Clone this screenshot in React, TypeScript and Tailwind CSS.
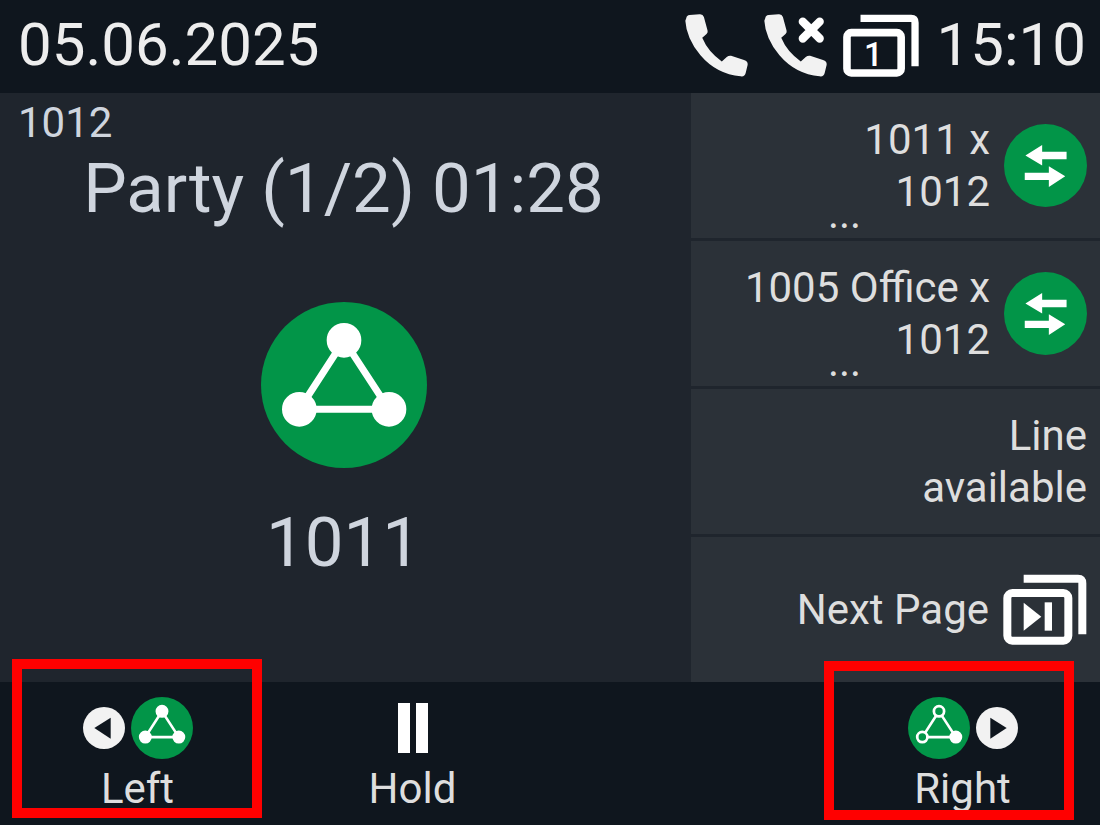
import React from "react";

const GREEN = "#029548";

const HANDSET =
  "M4 12Q5 4 14 3L44 1Q54 0 57 9L68 50Q70 56 65 60L52 72Q70 115 111 143L126 130Q131 125 139 126L178 139Q190 143 189 153L183 178Q180 190 168 188Q95 182 46 124Q4 72 1 20Z";

function PhoneIcon({ missed = false }: { missed?: boolean }) {
  return (
    <svg viewBox="0 0 190 190" className="size-[63px] shrink-0" aria-hidden="true">
      <path d={HANDSET} fill="#f2f2f2" />
      {missed && (
        <path d="M117 23L168 74M168 23L117 74" stroke="#ffffff" strokeWidth="25" strokeLinecap="round" />
      )}
    </svg>
  );
}

function PageIcon() {
  return (
    <svg viewBox="0 0 230 190" className="h-[63px] w-[76px] shrink-0" role="img" aria-label="Page 1">
      <path d="M53 13H206Q218 13 218 26V158" fill="none" stroke="#ffffff" strokeWidth="22" />
      <rect x="12" y="56" width="164" height="122" rx="13" fill="none" stroke="#ffffff" strokeWidth="23" />
      <text
        x="92"
        y="158"
        textAnchor="middle"
        fontFamily="Roboto, sans-serif"
        fontSize="100"
        fontWeight="500"
        fill="#ffffff"
      >
        1
      </text>
    </svg>
  );
}

function NextPageIcon() {
  return (
    <svg viewBox="0 0 252 213" className="h-[71px] w-[84px] shrink-0" aria-hidden="true">
      <path d="M62 14H225Q238 14 238 28V181" fill="none" stroke="#ffffff" strokeWidth="24" />
      <rect x="13" y="57" width="183" height="143" rx="15" fill="none" stroke="#ffffff" strokeWidth="24" />
      <path d="M62 86L115 128L62 170Z" fill="#ffffff" />
      <rect x="125" y="85" width="22" height="85" fill="#ffffff" />
    </svg>
  );
}

function TransferIcon() {
  return (
    <svg viewBox="0 0 248 248" className="size-[83px] shrink-0" aria-hidden="true">
      <circle cx="124" cy="124" r="124" fill={GREEN} />
      <path
        d="M64 94L114 63V83H187V105H114V124ZM183 156L134 126V146H62V167H134V188Z"
        fill="#ffffff"
      />
    </svg>
  );
}

function ConferenceIcon({ className, hollow = false }: { className: string; hollow?: boolean }) {
  const ring = hollow ? GREEN : "#ffffff";
  return (
    <svg viewBox="0 0 498 498" className={className} aria-hidden="true">
      <circle cx="249" cy="249" r="249" fill={GREEN} />
      <path d="M249 115L115 322H384Z" fill="none" stroke="#ffffff" strokeWidth="21" />
      <circle cx="249" cy="115" r="41" fill={ring} stroke="#ffffff" strokeWidth="22" />
      <circle cx="115" cy="322" r="41" fill={ring} stroke="#ffffff" strokeWidth="22" />
      <circle cx="384" cy="322" r="41" fill="#ffffff" stroke="#ffffff" strokeWidth="22" />
    </svg>
  );
}

function ArrowDot({ direction }: { direction: "left" | "right" }) {
  return (
    <svg viewBox="0 0 126 126" className="size-[42px] shrink-0" aria-hidden="true">
      <circle cx="63" cy="63" r="63" fill="#f2f2f2" />
      <path d={direction === "left" ? "M34 63L83 32V95Z" : "M92 63L43 32V95Z"} fill="#0f161e" />
    </svg>
  );
}

function LineKey({ lines, more = false, icon }: { lines: string[]; more?: boolean; icon?: React.ReactNode }) {
  return (
    <button
      type="button"
      className="flex flex-1 items-center justify-end gap-3.5 bg-[#2b3138] pr-[13px] pl-2 text-[42px] leading-[52px] text-[#dedede]"
    >
      <span className="flex flex-1 flex-col text-right">
        {lines.map((line) => (
          <span key={line}>{line}</span>
        ))}
        {more && <span className="-mt-3.5 -mb-1.5 text-center leading-5">...</span>}
      </span>
      {icon}
    </button>
  );
}

function SoftKey({ label, children }: { label: string; children: React.ReactNode }) {
  return (
    <button type="button" className="flex w-full flex-col items-center gap-1 text-[42px] leading-[52px] text-[#dedede]">
      <span className="flex h-[62px] items-center justify-center gap-1.5">{children}</span>
      <span>{label}</span>
    </button>
  );
}

export default function App() {
  return (
    <div className="flex min-h-screen flex-col overflow-hidden bg-[#0f161e] font-[Roboto,sans-serif]">
      <header className="flex h-[93px] items-center justify-between pr-3.5 pb-[3px] pl-[18px] text-[60px] text-[#ededed]">
        <time dateTime="2025-06-05">05.06.2025</time>
        <div className="flex items-center gap-4">
          <PhoneIcon />
          <PhoneIcon missed />
          <PageIcon />
          <time dateTime="15:10" className="pl-0.5">15:10</time>
        </div>
      </header>

      <div className="flex flex-1 bg-[#1f252d]">
        <main className="flex flex-1 flex-col items-center pt-1 pr-1 text-[#cfd5de]">
          <p className="self-start pl-[18px] text-[42px] leading-[52px]">1012</p>
          <h1 className="text-[69px] leading-20">Party (1/2) 01:28</h1>
          <ConferenceIcon className="mt-[73px] size-[166px]" />
          <p className="mt-[35px] text-[69px] leading-20">1011</p>
        </main>
        <aside className="flex w-[409px] flex-col gap-[3px]">
          <LineKey lines={["1011 x", "1012"]} more icon={<TransferIcon />} />
          <LineKey lines={["1005 Office x", "1012"]} more icon={<TransferIcon />} />
          <LineKey lines={["Line", "available"]} />
          <LineKey lines={["Next Page"]} icon={<NextPageIcon />} />
        </aside>
      </div>

      <footer className="grid h-[143px] grid-cols-4 pt-[15px]">
        <div className="relative">
          <SoftKey label="Left">
            <ArrowDot direction="left" />
            <ConferenceIcon className="size-[62px]" />
          </SoftKey>
          <div className="pointer-events-none absolute -top-[38px] left-3 h-[159px] w-[250px] border-10 border-[#ff0000]" />
        </div>
        <SoftKey label="Hold">
          <svg viewBox="0 0 30 50" className="h-[50px] w-[30px]" aria-hidden="true">
            <path d="M0 0H12V50H0ZM18 0H30V50H18Z" fill="#ffffff" />
          </svg>
        </SoftKey>
        <div className="relative col-start-4">
          <SoftKey label="Right">
            <ConferenceIcon className="size-[62px]" hollow />
            <ArrowDot direction="right" />
          </SoftKey>
          <div className="pointer-events-none absolute -top-9 -left-px h-[159px] w-[250px] border-10 border-[#ff0000]" />
        </div>
      </footer>
    </div>
  );
}
